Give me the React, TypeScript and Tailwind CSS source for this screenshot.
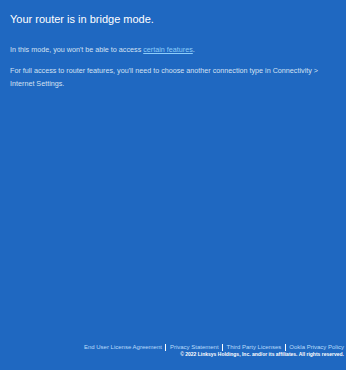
export default function App() {
  return (
    <div
      className="flex h-[370px] w-[346px] flex-col justify-between bg-[#1f68c1] pt-[11px] pb-[12px] pl-[10px] pr-[2px]"
      style={{ fontFamily: "'Liberation Sans', Arial, sans-serif" }}
    >
      <div className="pr-[12px]">
        <h1 className="text-[11px] leading-[16px] text-white">Your router is in bridge mode.</h1>
        <p className="mt-[17px] text-[7.2px] leading-[12px] text-[#d3e1f3]">
          In this mode, you won't be able to access{" "}
          <a className="text-[#8ccdfa] underline">certain features</a>.
        </p>
        <p className="mt-[8px] text-[7.2px] leading-[13px] text-[#d3e1f3]">
          For full access to router features, you'll need to choose another connection type in Connectivity &gt; Internet Settings.
        </p>
      </div>

      <footer className="flex flex-col items-end text-[6px] leading-[7px]">
        <div className="flex items-center text-[#b9dcfb]">
          <a>End User License Agreement</a>
          <span className="mx-[3.5px] h-[7px] w-px bg-white" />
          <a>Privacy Statement</a>
          <span className="mx-[3.5px] h-[7px] w-px bg-white" />
          <a>Third Party Licenses</a>
          <span className="mx-[3.5px] h-[7px] w-px bg-white" />
          <a>Ookla Privacy Policy</a>
        </div>
        <div className="text-[5px] font-bold text-white">
          © 2022 Linksys Holdings, Inc. and/or its affiliates. All rights reserved.
        </div>
      </footer>
    </div>
  );
}
